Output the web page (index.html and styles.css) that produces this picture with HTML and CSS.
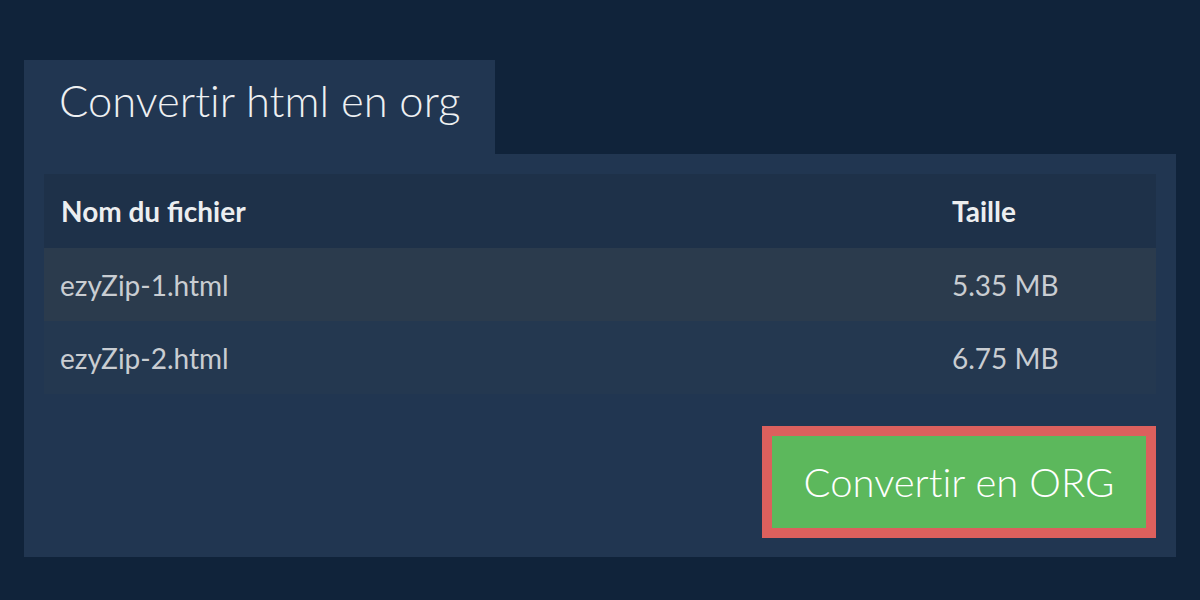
FILE: index.html
```html
<!DOCTYPE html>
<html lang="fr">
<head>
<meta charset="utf-8">
<title>Convertir html en org</title>
<link rel="stylesheet" href="styles.css">
</head>
<body>
<main class="page">
  <div class="tab"><h1 class="title">Convertir html en org</h1></div>
  <section class="panel">
    <table class="files">
      <thead>
        <tr class="head-row"><th class="col-name">Nom du fichier</th><th class="col-size">Taille</th></tr>
      </thead>
      <tbody>
        <tr class="row row-odd"><td class="col-name">ezyZip-1.html</td><td class="col-size">5.35 MB</td></tr>
        <tr class="row row-even"><td class="col-name">ezyZip-2.html</td><td class="col-size">6.75 MB</td></tr>
      </tbody>
    </table>
    <div class="actions">
      <button class="convert" type="button">Convertir en ORG</button>
    </div>
  </section>
</main>
</body>
</html>
```

FILE: styles.css
```css
html, body {
  margin: 0;
  padding: 0;
  background: #10233a;
  font-family: Lato, "Open Sans", sans-serif;
}

.page {
  padding: 60px 24px 0;
}

.tab {
  width: 471px;
  height: 94px;
  background: #213651;
  box-sizing: border-box;
  padding-left: 35px;
}

.title {
  margin: 0;
  font-weight: 300;
  font-size: 43.5px;
  line-height: 80px;
  color: #eef0f2;
  font-variant-ligatures: none;
}

.panel {
  background: #213651;
  padding: 20px 20px 19px;
}

.files {
  width: 100%;
  border-collapse: collapse;
  font-size: 28px;
}

.head-row {
  background: #1e3149;
  height: 74px;
}

.files th {
  text-align: left;
  font-weight: 700;
  color: #eceef0;
  padding: 0 0 0 17px;
}

.files th.col-size,
.files td.col-size {
  width: 204px;
  padding-left: 0;
}

.row {
  height: 73px;
}

.row-odd {
  background: #2b3b4d;
}

.row-even {
  background: #243850;
}

.files td {
  color: #c9cdd2;
  padding: 0 0 0 16px;
}

.actions {
  display: flex;
  justify-content: flex-end;
  padding-top: 32px;
}

.convert {
  width: 394px;
  height: 112px;
  background: #5cb85c;
  border: 10px solid #dc605d;
  color: #ffffff;
  font-family: Lato, "Open Sans", sans-serif;
  font-weight: 300;
  font-size: 40px;
  padding: 0;
  cursor: pointer;
  font-variant-ligatures: none;
}
```
